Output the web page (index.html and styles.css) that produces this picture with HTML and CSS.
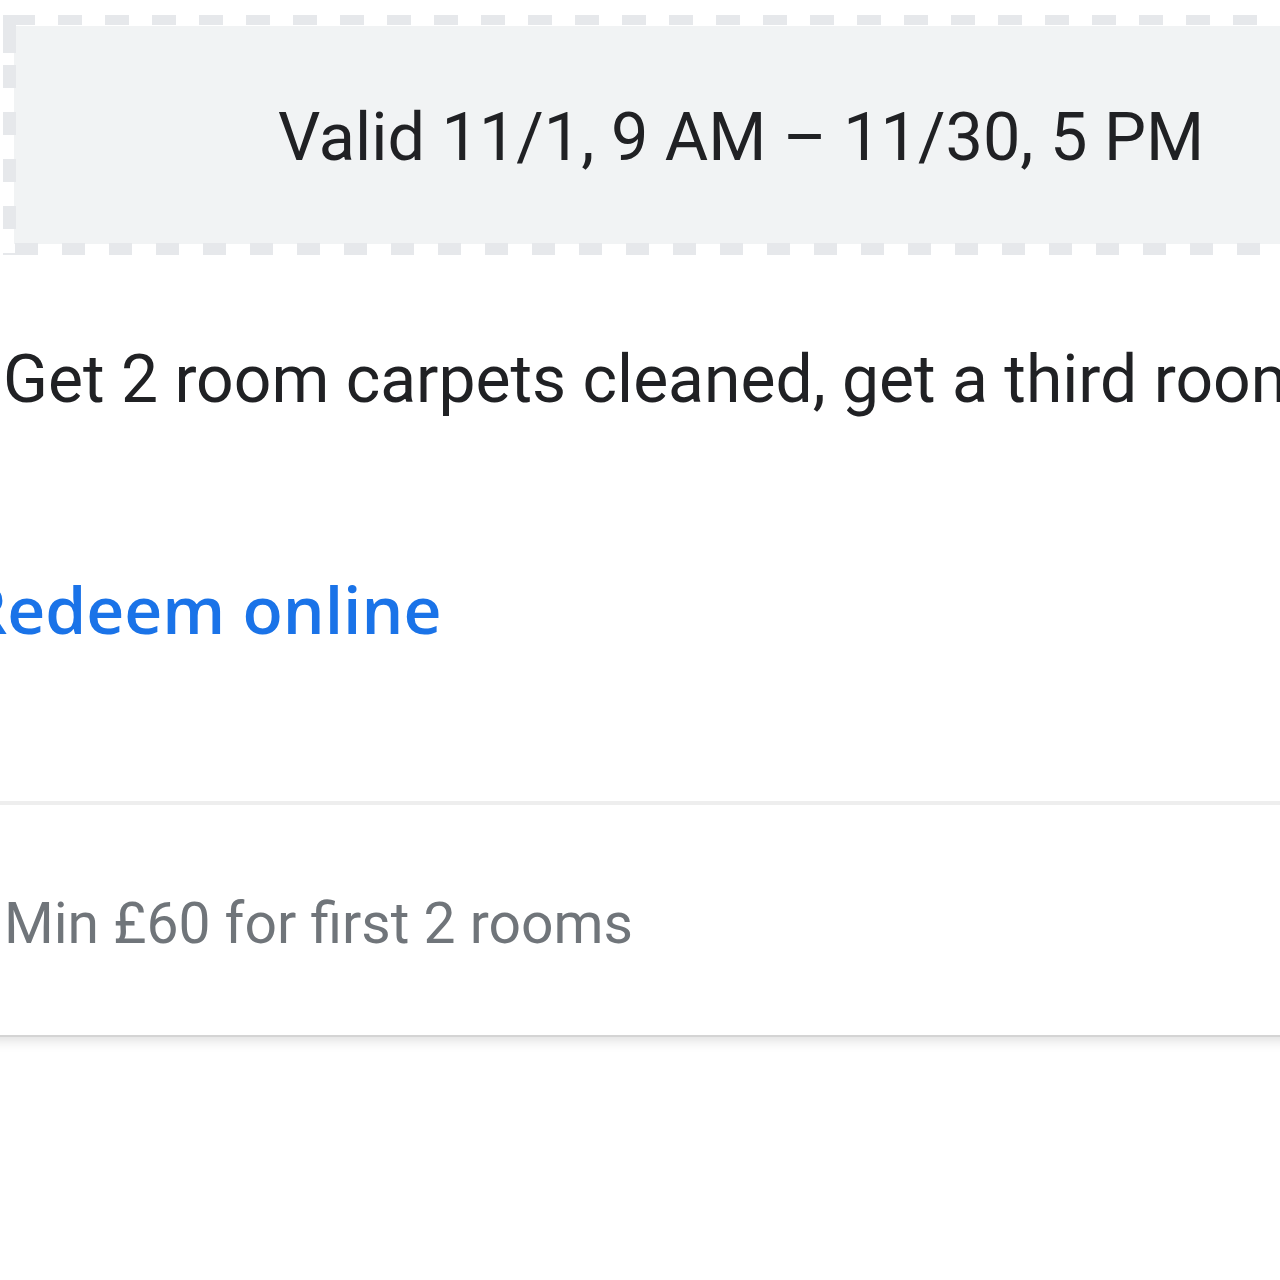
FILE: index.html
```html
<!DOCTYPE html>
<html lang="en">
<head>
<meta charset="utf-8">
<title>Offer</title>
<link rel="stylesheet" href="styles.css">
</head>
<body>
<div class="card">
  <div class="offer">
    <div class="validity"><span class="validity-text">Valid 11/1, 9 AM – 11/30, 5 PM</span></div>
    <div class="title">Get 2 room carpets cleaned, get a third room cleaned free</div>
    <a class="redeem" href="#">Redeem online</a>
  </div>
  <div class="terms">Min £60 for first 2 rooms</div>
</div>
</body>
</html>
```

FILE: styles.css
```css
html, body {
  margin: 0;
  padding: 0;
  background: #ffffff;
  overflow: hidden;
}

body {
  width: 1280px;
  height: 1280px;
  font-family: Roboto, "Liberation Sans", Arial, sans-serif;
}

.card {
  width: 1700px;
  margin-left: -20px;
  background: #ffffff;
  box-shadow: 0 2px 0 #d4d4d4, 0 5px 12px rgba(0, 0, 0, 0.14);
}

.offer {
  padding: 15px 0 153px 23px;
  display: flex;
  flex-direction: column;
}

.validity {
  --dash: #e6e8eb;
  width: 1474px;
  height: 240px;
  box-sizing: border-box;
  border: 11px solid transparent;
  background-color: #ffffff;
  background-image:
    linear-gradient(var(--dash), var(--dash)),
    linear-gradient(var(--dash), var(--dash)),
    linear-gradient(90deg, var(--dash) 0 24px, transparent 24px),
    linear-gradient(90deg, var(--dash) 0 23px, transparent 23px),
    linear-gradient(180deg, var(--dash) 0 23px, transparent 23px),
    linear-gradient(#f1f3f4, #f1f3f4);
  background-origin: border-box, border-box, border-box, border-box, border-box, padding-box;
  background-clip: border-box, border-box, border-box, border-box, border-box, padding-box;
  background-size: 30px 10px, 13px 38px, 47px 10px, 47px 12px, 13px 47px, 100% 100%;
  background-position: 0 0, 0 0, 8px 0, 12px 100%, 0 3px, 0 0;
  background-repeat: no-repeat, no-repeat, repeat-x, repeat-x, repeat-y, no-repeat;
  display: flex;
  align-items: center;
  justify-content: center;
}

.validity-text {
  font-size: 66.6px;
  line-height: 80px;
  padding-top: 4px;
  padding-left: 2px;
  color: #202124;
  white-space: nowrap;
}

.title {
  margin-top: 85px;
  font-size: 66px;
  line-height: 80px;
  color: #202124;
  white-space: nowrap;
}

.redeem {
  margin-top: 148px;
  margin-left: -38px;
  font-family: "Open Sans", "Noto Sans", sans-serif;
  font-weight: 600;
  font-size: 66px;
  line-height: 80px;
  color: #1a73e8;
  text-decoration: none;
  white-space: nowrap;
  align-self: flex-start;
}

.terms {
  border-top: 4px solid #eeeeee;
  padding: 84px 0 76px 24px;
  font-size: 57px;
  line-height: 70px;
  color: #70757a;
  white-space: nowrap;
}
```
